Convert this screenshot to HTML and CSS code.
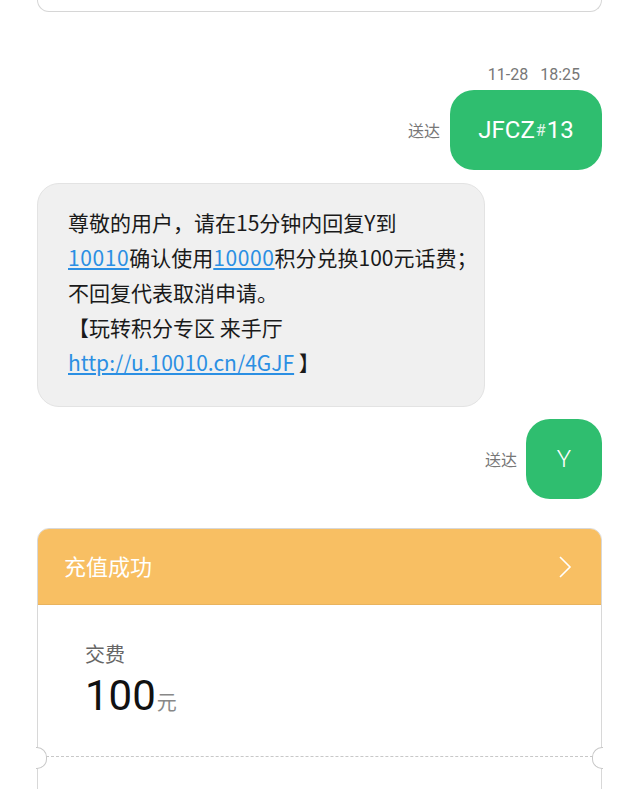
FILE: index.html
```html
<!DOCTYPE html>
<html lang="zh-CN">
<head>
  <meta charset="UTF-8">
  <title>短信</title>
  <link rel="stylesheet" href="styles.css">
</head>
<body>
  <div class="chat">
    <div class="prev-card"></div>

    <div class="time">11-28&nbsp;&nbsp;&nbsp;18:25</div>

    <div class="row out">
      <span class="status">送达</span>
      <div class="bubble green wide">JFCZ<span class="hash">#</span>13</div>
    </div>

    <div class="row in">
      <div class="bubble gray">
        尊敬的用户，请在15分钟内回复Y到<br>
        <a class="num-link" href="#">10010</a>确认使用<a class="num-link" href="#">10000</a>积分兑换100元话费；<br>
        不回复代表取消申请。<br>
        【玩转积分专区 来手厅<br>
        <a href="#">http://u.10010.cn/4GJF</a> 】
      </div>
    </div>

    <div class="row out second">
      <span class="status">送达</span>
      <div class="bubble green small">Y</div>
    </div>

    <div class="card">
      <div class="card-head">
        <span>充值成功</span>
        <svg class="chev" width="14" height="24" viewBox="0 0 14 24">
          <polyline points="2,2 12,12 2,22" fill="none" stroke="#fff" stroke-width="1.6"/>
        </svg>
      </div>
      <div class="card-body">
        <div class="label">交费</div>
        <div class="amount"><span class="num">100</span><span class="unit">元</span></div>
      </div>
      <div class="tear"></div>
      <div class="card-foot"></div>
    </div>
  </div>
</body>
</html>
```

FILE: styles.css
```css
body { margin: 0; background: #fff; font-family: "Noto Sans CJK SC", "Noto Sans", sans-serif; color: #222; }
.chat { padding: 0 38px 0 37px; }

.prev-card { height: 11px; border: 1px solid #d6d6d6; border-top: none; border-radius: 0 0 14px 14px; }

.time { margin-top: 53px; line-height: 20px; font-family: Roboto, sans-serif; font-size: 16px; color: #777; text-align: right; padding-right: 22px; }

.row { display: flex; align-items: center; }
.row.out { justify-content: flex-end; gap: 10px; margin-top: 5px; }
.row.in { margin-top: 13px; }
.row.second { margin-top: 12px; gap: 9px; }

.status { font-size: 16px; color: #777; }

.bubble { box-sizing: border-box; }
.green { background: #2fbe6f; color: #fff; height: 80px; border-radius: 24px; display: flex; align-items: center; justify-content: center; }
.green.wide { width: 152px; font-family: Roboto, "Noto Sans CJK SC", sans-serif; font-size: 24px; }
.green.small { width: 76px; font-family: Roboto, sans-serif; font-size: 24px; font-weight: 300; }
.hash { font-size: 16px; opacity: 0.85; margin: 0 1px; }

.gray { width: 448px; background: #f0f0f0; border: 1px solid #e3e3e3; border-radius: 22px; padding: 21px 20px 26px 30px; font-size: 21px; line-height: 35px; white-space: nowrap; color: #1a1a1a; }
.gray a { color: #2b8fe3; text-decoration: underline; }
.gray a.num-link { letter-spacing: 0.6px; }

.card { margin-top: 29px; border: 1px solid #d8d8d8; border-radius: 12px 12px 0 0; position: relative; }
.card-head { height: 75px; background: #f8bf63; border-radius: 11px 11px 0 0; display: flex; align-items: center; justify-content: space-between; padding: 0 29px 0 26px; color: #fff; font-size: 22px; border-bottom: 1px solid #e9b35e; }
.card-head span { margin-top: -4px; }
.card-body { padding: 35px 0 0 47px; height: 118px; box-sizing: border-box; }
.label { font-size: 20px; color: #666; line-height: 28px; }
.amount { margin-top: 4px; line-height: 48px; }
.num { font-family: Roboto, sans-serif; font-size: 42px; color: #111; }
.unit { font-size: 20px; color: #888; margin-left: 1px; }

.tear { margin: 33px 8px 0; border-top: 1px dashed #c8c8c8; position: relative; }
.tear::before, .tear::after { content: ""; position: absolute; top: -10px; width: 10px; height: 20px; background: #fff; border: 1px solid #c8c8c8; }
.tear::before { left: -10px; border-left: none; border-radius: 0 10px 10px 0; }
.tear::after { right: -10px; border-right: none; border-radius: 10px 0 0 10px; }
.card-foot { height: 60px; }
```
